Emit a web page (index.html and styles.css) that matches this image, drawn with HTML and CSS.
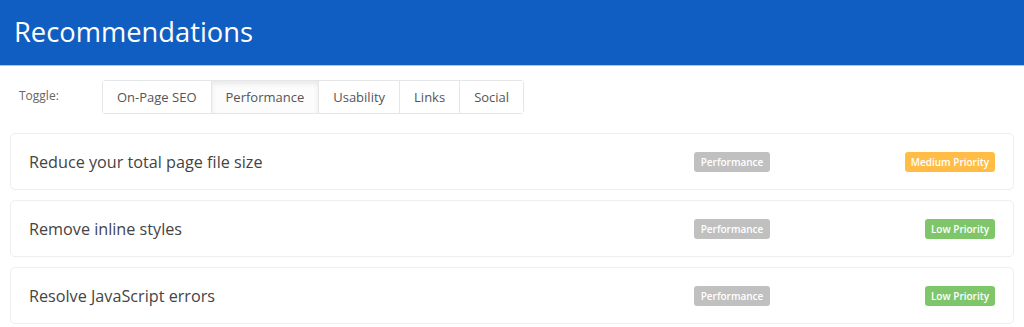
FILE: index.html
```html
<!DOCTYPE html>
<html>
<head>
<meta charset="utf-8">
<link rel="stylesheet" href="styles.css">
</head>
<body>
<header class="header"><h1 class="title">Recommendations</h1></header>
<div class="toggle-row">
  <span class="toggle-label">Toggle:</span>
  <div class="btn-group">
    <button class="btn">On-Page SEO</button>
    <button class="btn active">Performance</button>
    <button class="btn">Usability</button>
    <button class="btn">Links</button>
    <button class="btn">Social</button>
  </div>
</div>
<div class="list">
  <div class="card">
    <div class="card-title">Reduce your total page file size</div>
    <span class="badge cat">Performance</span>
    <div class="prio-cell"><span class="badge medium">Medium Priority</span></div>
  </div>
  <div class="card">
    <div class="card-title">Remove inline styles</div>
    <span class="badge cat">Performance</span>
    <div class="prio-cell"><span class="badge low">Low Priority</span></div>
  </div>
  <div class="card">
    <div class="card-title">Resolve JavaScript errors</div>
    <span class="badge cat">Performance</span>
    <div class="prio-cell"><span class="badge low">Low Priority</span></div>
  </div>
</div>
</body>
</html>
```
FILE: styles.css
```css
* { box-sizing: border-box; }
body {
  margin: 0;
  font-family: "Open Sans", "Noto Sans", sans-serif;
  background: #fff;
  color: #555;
}
.header {
  height: 66px;
  background: #105ec1;
  border-bottom: 1px solid #a9c6ec;
  display: flex;
  align-items: center;
  padding: 0 14px;
}
.title {
  margin: 0;
  font-size: 27.3px;
  font-weight: 400;
  color: #fff;
  line-height: 1;
  padding-bottom: 2px;
}
.toggle-row {
  display: flex;
  align-items: center;
  padding: 14px 0 0 19px;
  height: 48px;
}
.toggle-label {
  font-size: 12px;
  color: #666;
  width: 83px;
  margin-top: -4px;
}
.btn-group {
  display: flex;
  border: 1px solid #e6e6e6;
  border-radius: 3px;
  height: 34px;
}
.btn {
  font-family: inherit;
  font-size: 13px;
  color: #555;
  background: #fff;
  border: none;
  border-left: 1px solid #e6e6e6;
  padding: 0 14px;
  height: 32px;
  cursor: pointer;
}
.btn:first-child { border-left: none; }
.btn.active {
  box-shadow: inset 0 3px 5px rgba(0,0,0,0.08);
  background: #fcfcfc;
}
.list {
  display: flex;
  flex-direction: column;
  gap: 10px;
  padding: 19px 10px 0;
}
.card {
  height: 57px;
  border: 1px solid #eee;
  border-radius: 5px;
  display: flex;
  align-items: center;
  padding: 0 18px;
}
.card-title {
  flex: 1;
  font-size: 16.2px;
  color: #444;
}
.badge {
  display: inline-flex;
  align-items: center;
  height: 20px;
  padding: 0 6px;
  border-radius: 3px;
  color: #fff;
  font-size: 10px;
  font-weight: 600;
}
.cat { background: #c0c0c0; width: 76px; justify-content: center; }
.prio-cell {
  width: 225px;
  display: flex;
  justify-content: flex-end;
}
.medium { background: #ffbd46; }
.low { background: #7fc66b; }
```
